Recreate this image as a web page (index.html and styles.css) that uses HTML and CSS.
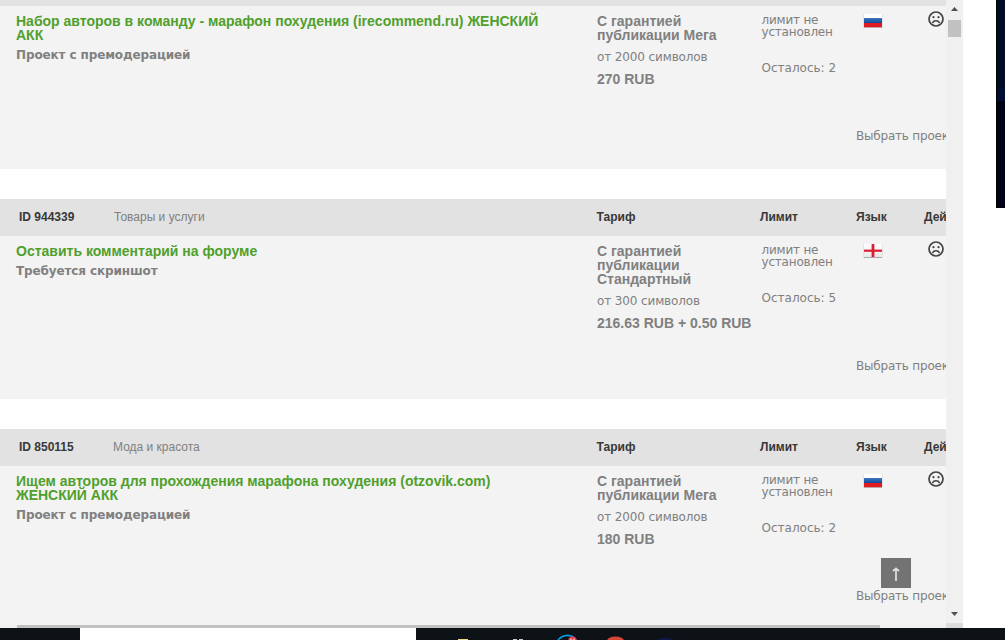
FILE: index.html
```html
<!DOCTYPE html>
<html lang="ru">
<head>
<meta charset="utf-8">
<title>Проекты</title>
<link rel="stylesheet" href="styles.css">
</head>
<body>
<svg class="defs" width="0" height="0">
  <defs>
    <linearGradient id="w" x1="0" y1="0" x2="0" y2="1"><stop offset="0" stop-color="#fff"/><stop offset="1" stop-color="#e8e8e8"/></linearGradient>
    <linearGradient id="b" x1="0" y1="0" x2="0" y2="1"><stop offset="0" stop-color="#3f78bb"/><stop offset="1" stop-color="#0b4a9c"/></linearGradient>
    <symbol id="face" viewBox="0 0 16 16">
      <circle cx="8" cy="8" r="7" fill="none" stroke="#444" stroke-width="1.7"/>
      <circle cx="5.5" cy="6.2" r="1.1" fill="#444"/><circle cx="10.5" cy="6.2" r="1.1" fill="#444"/>
      <path d="M4.6 12C5.2 8.900 10.8 8.900 11.4 12" fill="none" stroke="#444" stroke-width="1.5"/>
    </symbol>
    <symbol id="ru" viewBox="0 0 20 15">
      <rect x="0.5" y="0" width="19" height="14" fill="#d4d4d4"/>
      <rect x="1" y="0" width="18" height="5" fill="#fff"/>
      <rect x="1" y="4" width="18" height="5" fill="url(#b)"/>
      <rect x="1" y="9" width="18" height="4" fill="#e11a22"/>
      <rect x="1" y="13" width="18" height="1" fill="#b9a5a5"/>
    </symbol>
    <symbol id="en" viewBox="0 0 20 15">
      <rect x="0.5" y="0" width="19" height="14" fill="#d4d4d4"/>
      <rect x="1" y="0" width="18" height="13" fill="url(#w)"/>
      <rect x="8.6" y="0" width="2.8" height="13" fill="#dc1e35"/>
      <rect x="1" y="5.6" width="18" height="2.2" fill="#dc1e35"/>
      <rect x="1" y="13" width="18" height="1" fill="#aaa"/>
    </symbol>
  </defs>
</svg>
<div class="screen">
  <div class="upper">
    <div class="window">
      <div class="viewport">
        <div class="list">
          <section class="card">
            <header class="head"></header>
            <div class="body">
              <div class="project">
                <div class="title">Набор авторов в команду - марафон похудения (irecommend.ru) ЖЕНСКИЙ<br>АКК</div>
                <div class="note">Проект с премодерацией</div>
              </div>
              <div class="tariff"><div class="plan">С гарантией<br>публикации Мега</div><div class="chars">от 2000 символов</div><div class="price">270 RUB</div></div>
              <div class="limit">лимит не<br>установлен<div class="left">Осталось: 2</div></div>
              <div class="actions"><div class="icons"><svg class="flag"><use href="#ru"/></svg><svg class="face"><use href="#face"/></svg></div><div class="pick">Выбрать проект</div></div>
            </div>
          </section>
          <section class="card">
            <header class="head"><div class="ident"><b>ID 944339</b><span class="cat">Товары и услуги</span></div><b>Тариф</b><b>Лимит</b><b>Язык</b><b>Действие</b></header>
            <div class="body">
              <div class="project">
                <div class="title">Оставить комментарий на форуме</div>
                <div class="note">Требуется скриншот</div>
              </div>
              <div class="tariff"><div class="plan">С гарантией<br>публикации<br>Стандартный</div><div class="chars">от 300 символов</div><div class="price">216.63 RUB + 0.50 RUB</div></div>
              <div class="limit">лимит не<br>установлен<div class="left">Осталось: 5</div></div>
              <div class="actions"><div class="icons"><svg class="flag"><use href="#en"/></svg><svg class="face"><use href="#face"/></svg></div><div class="pick">Выбрать проект</div></div>
            </div>
          </section>
          <section class="card">
            <header class="head"><div class="ident"><b>ID 850115</b><span class="cat near">Мода и красота</span></div><b>Тариф</b><b>Лимит</b><b>Язык</b><b>Действие</b></header>
            <div class="body">
              <div class="project">
                <div class="title">Ищем авторов для прохождения марафона похудения (otzovik.com)<br>ЖЕНСКИЙ АКК</div>
                <div class="note">Проект с премодерацией</div>
              </div>
              <div class="tariff"><div class="plan">С гарантией<br>публикации Мега</div><div class="chars">от 2000 символов</div><div class="price">180 RUB</div></div>
              <div class="limit">лимит не<br>установлен<div class="left">Осталось: 2</div></div>
              <div class="actions"><div class="icons"><svg class="flag"><use href="#ru"/></svg><svg class="face"><use href="#face"/></svg></div><div class="pick">Выбрать проект</div></div>
            </div>
          </section>
        </div>
        <div class="totop"><svg width="30" height="30"><path d="M15 10.5V23M12 13L15 10.5L18 13" fill="none" stroke="#ddd" stroke-width="1.8"/></svg></div>
      </div>
      <div class="vbar">
        <svg width="17" height="20"><path d="M5 11L8.5 7L12 11Z" fill="#505050"/></svg>
        <div class="vthumb"></div>
        <svg class="down" width="17" height="12"><path d="M5 4L12 4L8.5 8Z" fill="#505050"/></svg>
      </div>
      <div class="hbar"><div class="hthumb"></div></div>
      <div class="corner"></div>
    </div>
    <div class="desktop"></div>
  </div>
  <div class="taskbar">
    <div class="search"></div>
    <svg class="tray" width="589" height="12">
      <rect x="42" y="11" width="10" height="1" fill="#e9dc84"/>
      <path d="M97 11.5H101M103 11.5H107" stroke="#ccc"/>
      <path d="M142 12A12 12 0 0 1 159 10" fill="none" stroke="#079be2" stroke-width="1.6"/>
      <circle cx="156.500" cy="13" r="4.500" fill="#e33c45"/><path d="M155 10.500V12M158 10.500V12" stroke="#fff"/>
      <ellipse cx="199.500" cy="13" rx="8.500" ry="4.500" fill="#d84536"/>
      <ellipse cx="249" cy="13" rx="9" ry="3" fill="#10184a"/>
    </svg>
  </div>
</div>
</body>
</html>
```
FILE: styles.css
```css
body {
  margin: 0;
  background: #fff;
  font-family: "Liberation Sans", Arial, sans-serif;
}
.defs { position: absolute; }
.screen { width: 1005px; height: 640px; overflow: hidden; }
.upper { display: flex; justify-content: space-between; height: 628px; }
.window {
  display: grid;
  grid-template-columns: 946px 17px;
  grid-template-rows: 623px 2px 3px;
}
.viewport { position: relative; grid-row: 1 / 3; overflow: hidden; }
.list { display: flex; flex-direction: column; gap: 30px; margin-top: -31px; }
.card { height: 200px; flex: none; white-space: nowrap; }
.head {
  display: grid;
  grid-template-columns: 596.500px 163.500px 96px 68px 90px;
  align-items: center;
  box-sizing: border-box;
  height: 37px;
  padding-bottom: 1px;
  background: #e2e2e2;
  color: #383838;
  font-size: 12px;
}
.ident { display: flex; padding-left: 19px; }
.ident b { width: 95px; }
.cat { color: #808080; }
.near { margin-left: -1px; }
.body {
  display: grid;
  grid-template-columns: 581px 164.500px 94.500px 160px;
  box-sizing: border-box;
  height: 163px;
  padding: 8px 0 0 16px;
  background: #f3f3f3;
  color: #808080;
}
.title { font-size: 14px; line-height: 14px; font-weight: bold; color: #4fa02b; }
.note { margin-top: 6px; font: bold 12px/14px "DejaVu Sans", Verdana, sans-serif; letter-spacing: -0.12px; }
.plan, .price { font-size: 14px; line-height: 14px; font-weight: bold; }
.chars { margin: 8px 0; font: 12px/14px "DejaVu Sans", Verdana, sans-serif; letter-spacing: -0.12px; }
.limit { font: 12px/12px "DejaVu Sans", Verdana, sans-serif; letter-spacing: -0.2px; }
.left { margin-top: 24px; letter-spacing: 0; }
.icons { display: flex; align-items: flex-start; height: 107px; padding-left: 7px; }
.flag { width: 20px; height: 15px; }
.face { width: 16px; height: 16px; margin: -3px 0 0 45px; }
.pick { font: 12px/14px "DejaVu Sans", Verdana, sans-serif; letter-spacing: -0.2px; padding-top: 8px; }
.totop {
  position: absolute;
  left: 881px;
  top: 558px;
  width: 30px;
  height: 30px;
  background: #737373;
}
.vbar { display: flex; flex-direction: column; background: #f0f0f0; }
.vthumb { width: 13px; height: 17px; margin-left: 2px; background: #c1c1c1; }
.down { margin-top: auto; margin-bottom: 3px; }
.hbar { grid-column: 1; grid-row: 3; background: #f0f0f0; }
.hthumb { width: 863px; height: 3px; margin-left: 17px; background: #c1c1c1; }
.corner { grid-column: 2; grid-row: 2 / 4; background: #dcdcdc; }
.desktop {
  box-sizing: border-box;
  width: 9px;
  height: 208px;
  border: solid #000;
  border-width: 0 0 1px 1px;
  background: linear-gradient(#000b25 89px, #000e34 89px, #000e34 101px, #000316 101px);
}
.taskbar { display: flex; height: 12px; background: #0d1217; }
.search { width: 336px; margin-left: 80px; background: #fff; }
```
